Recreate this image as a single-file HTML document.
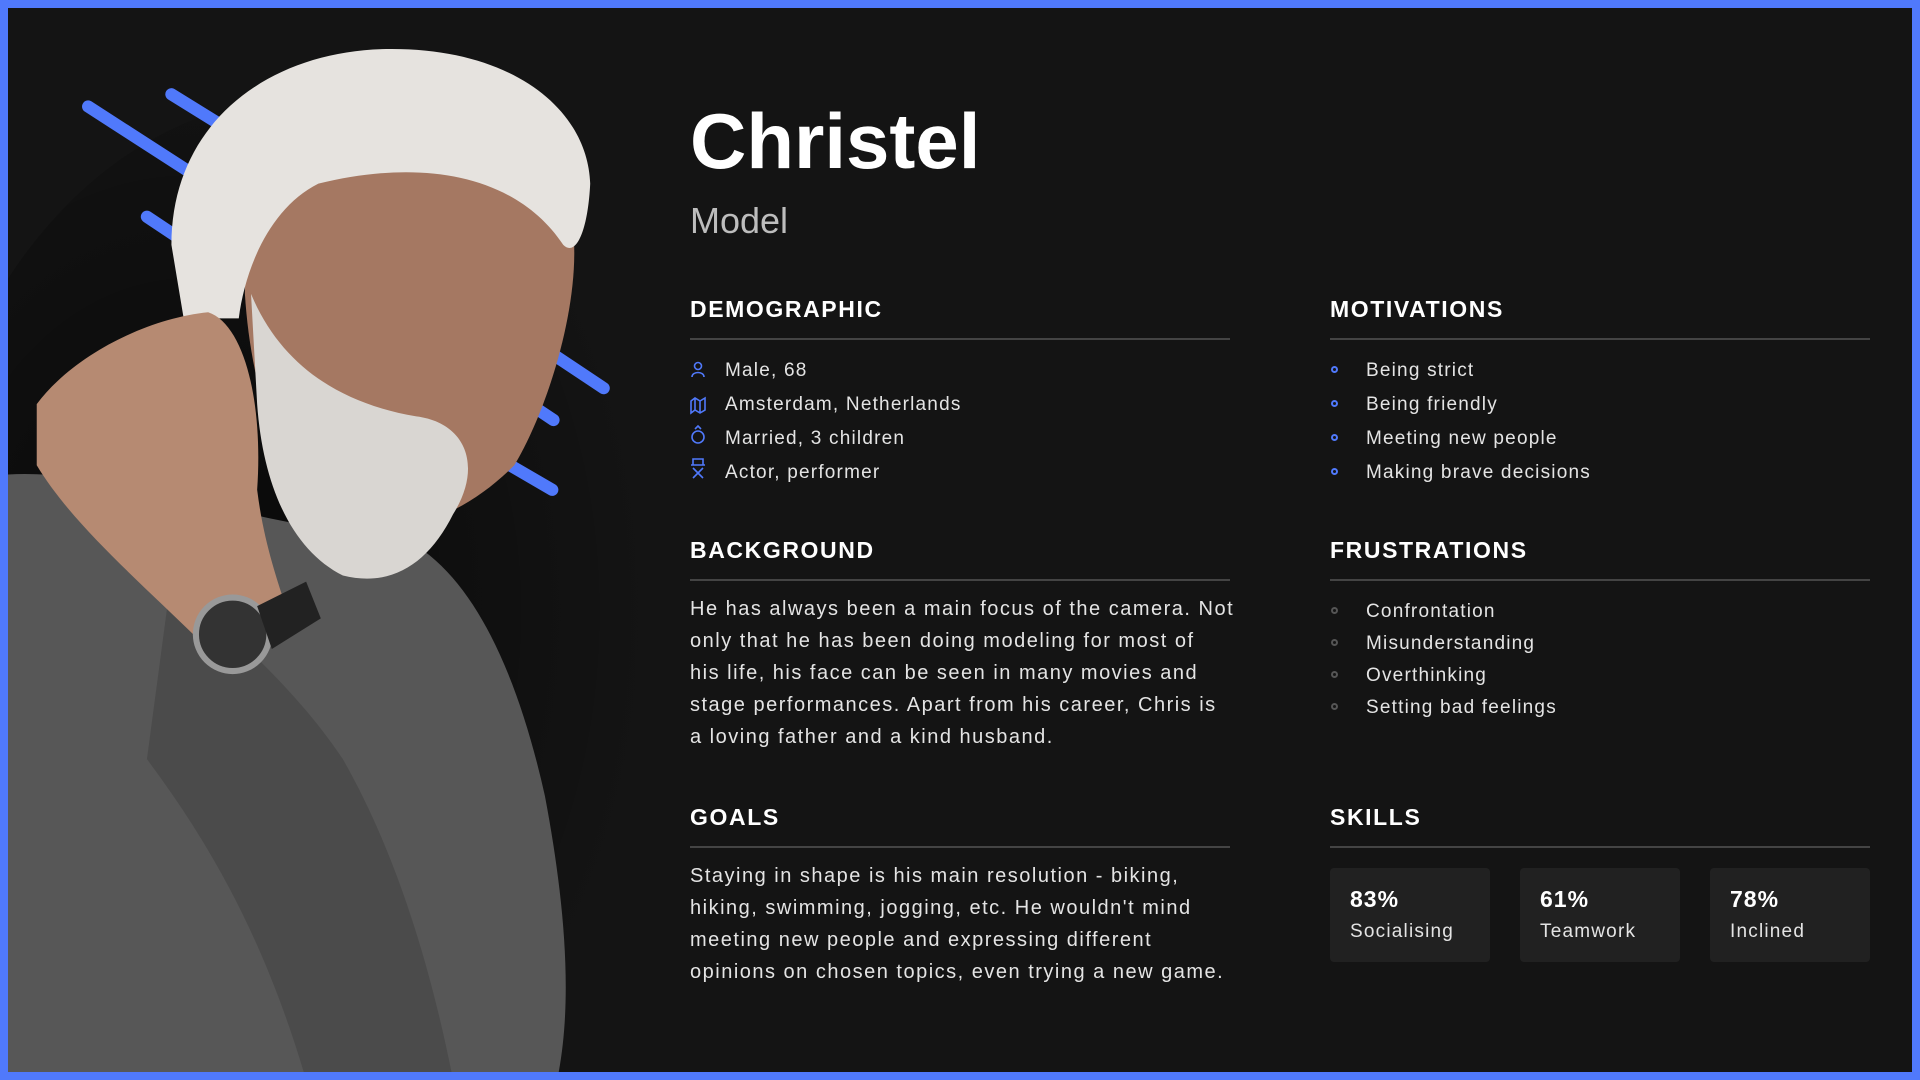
<!DOCTYPE html>
<html><head><meta charset="utf-8"><style>
*{margin:0;padding:0;box-sizing:border-box}
body{width:1920px;height:1080px;background:#5079fb;position:relative;overflow:hidden;font-family:"Liberation Sans",sans-serif;color:#e8e8e8}
#main{position:absolute;left:8px;top:8px;width:1904px;height:1064px;background:#141414;overflow:hidden}
.abs{position:absolute}
h1{position:absolute;left:682px;top:88px;font-size:78px;font-weight:bold;color:#fff}
.role{position:absolute;left:682px;top:192px;font-size:36px;color:#bdbdbd}
.h{position:absolute;font-size:23px;font-weight:bold;letter-spacing:1.6px;color:#fff}
.line{position:absolute;height:2px;background:#444;width:540px}
.it{position:absolute;font-size:19px;letter-spacing:1.2px;color:#e4e4e4}
.p{position:absolute;font-size:20px;letter-spacing:1.5px;line-height:32px;color:#e4e4e4;white-space:nowrap}
.dot{position:absolute;width:7px;height:7px;border:2px solid #5079fb;border-radius:50%}
.dot.g{border-color:#555}
.card{position:absolute;top:860px;width:160px;height:94px;background:#212121;border-radius:4px;padding:18px 20px}
.card b{display:block;font-size:23px;color:#fff;letter-spacing:1px}
.card span{display:block;font-size:19px;letter-spacing:1.2px;margin-top:8px;color:#e4e4e4}
</style></head><body><div id="main">
<svg class="abs" style="left:-8px;top:-8px" width="1920" height="1080" viewBox="0 0 1568 882">
<defs><radialGradient id="sh" cx="0.35" cy="0.5" r="0.6"><stop offset="0" stop-color="#000" stop-opacity="0.6"/><stop offset="1" stop-color="#000" stop-opacity="0"/></radialGradient></defs>
<ellipse cx="250" cy="500" rx="320" ry="420" fill="url(#sh)"/>
<g stroke="#5079fb" stroke-width="10" stroke-linecap="round">
<line x1="72" y1="87" x2="165" y2="147"/><line x1="140" y1="77" x2="190" y2="108"/><line x1="120" y1="177" x2="150" y2="197"/>
<line x1="445" y1="285" x2="493" y2="317"/><line x1="425" y1="325" x2="452" y2="343"/><line x1="408" y1="375" x2="451" y2="400"/>
</g>
<path d="M0,388 C90,380 200,430 330,440 C390,470 425,560 445,650 C462,740 468,820 455,882 L0,882 Z" fill="#575757"/>
<path d="M140,470 C190,520 240,560 280,620 C320,690 350,780 370,882 L250,882 C220,780 180,700 120,620 Z" fill="#4b4b4b"/>
<path d="M200,120 C260,80 420,90 465,170 C480,230 450,330 420,380 C380,420 330,440 280,430 C230,400 205,320 200,240 Z" fill="#a57862"/>
<path d="M205,240 C230,300 280,330 340,340 C380,345 395,380 370,420 C350,460 320,480 280,470 C240,450 215,400 210,330 Z" fill="#d9d6d2"/>
<path d="M140,200 C140,100 220,40 320,40 C420,40 480,90 482,150 C480,190 470,210 460,200 C420,140 340,130 260,150 C220,170 200,220 195,260 L150,260 Z" fill="#e6e3df"/>
<path d="M30,330 C60,290 120,260 170,255 C200,265 215,330 210,400 C215,440 225,470 235,500 L170,530 C120,480 60,430 30,380 Z" fill="#b68a72"/>
<circle cx="190" cy="518" r="30" fill="#333" stroke="#999" stroke-width="5"/>
<path d="M210,495 L250,475 L262,505 L222,530 Z" fill="#222"/>
</svg>
<h1>Christel</h1>
<div class="role">Model</div>

<div class="h" style="left:682px;top:288px">DEMOGRAPHIC</div>
<div class="line" style="left:682px;top:330px"></div>
<svg class="abs" style="left:682px;top:353px" width="18" height="124" fill="none" stroke="#5079fb" stroke-width="1.6">
<circle cx="8" cy="5" r="3.5"/><path d="M2,16 C2,10 14,10 14,16"/>
<path d="M1,40 L5,37 L10,40 L15,37 L15,49 L10,52 L5,49 L1,52 Z M5,37 V49 M10,40 V52"/>
<circle cx="8" cy="76" r="6"/><path d="M5,68 L8,65 L11,68"/>
<path d="M3,98 H13 V104 H3 Z M1,104 H15 M3,107 L13,117 M13,107 L3,117" />
</svg>
<div class="it" style="left:717px;top:352px">Male, 68</div>
<div class="it" style="left:717px;top:386px">Amsterdam, Netherlands</div>
<div class="it" style="left:717px;top:420px">Married, 3 children</div>
<div class="it" style="left:717px;top:454px">Actor, performer</div>

<div class="h" style="left:1322px;top:288px">MOTIVATIONS</div>
<div class="line" style="left:1322px;top:330px"></div>
<div class="dot" style="left:1323px;top:358px"></div><div class="it" style="left:1358px;top:352px">Being strict</div>
<div class="dot" style="left:1323px;top:392px"></div><div class="it" style="left:1358px;top:386px">Being friendly</div>
<div class="dot" style="left:1323px;top:426px"></div><div class="it" style="left:1358px;top:420px">Meeting new people</div>
<div class="dot" style="left:1323px;top:460px"></div><div class="it" style="left:1358px;top:454px">Making brave decisions</div>

<div class="h" style="left:1322px;top:529px">FRUSTRATIONS</div>
<div class="line" style="left:1322px;top:571px"></div>
<div class="dot g" style="left:1323px;top:599px"></div><div class="it" style="left:1358px;top:593px">Confrontation</div>
<div class="dot g" style="left:1323px;top:631px"></div><div class="it" style="left:1358px;top:625px">Misunderstanding</div>
<div class="dot g" style="left:1323px;top:663px"></div><div class="it" style="left:1358px;top:657px">Overthinking</div>
<div class="dot g" style="left:1323px;top:695px"></div><div class="it" style="left:1358px;top:689px">Setting bad feelings</div>

<div class="h" style="left:682px;top:529px">BACKGROUND</div>
<div class="line" style="left:682px;top:571px"></div>
<div class="p" style="left:682px;top:585px">He has always been a main focus of the camera. Not<br>only that he has been doing modeling for most of<br>his life, his face can be seen in many movies and<br>stage performances. Apart from his career, Chris is<br>a loving father and a kind husband.</div>

<div class="h" style="left:682px;top:796px">GOALS</div>
<div class="line" style="left:682px;top:838px"></div>
<div class="p" style="left:682px;top:852px">Staying in shape is his main resolution - biking,<br>hiking, swimming, jogging, etc. He wouldn't mind<br>meeting new people and expressing different<br>opinions on chosen topics, even trying a new game.</div>

<div class="h" style="left:1322px;top:796px">SKILLS</div>
<div class="line" style="left:1322px;top:838px"></div>
<div class="card" style="left:1322px"><b>83%</b><span>Socialising</span></div>
<div class="card" style="left:1512px"><b>61%</b><span>Teamwork</span></div>
<div class="card" style="left:1702px"><b>78%</b><span>Inclined</span></div>
</div></body></html>
